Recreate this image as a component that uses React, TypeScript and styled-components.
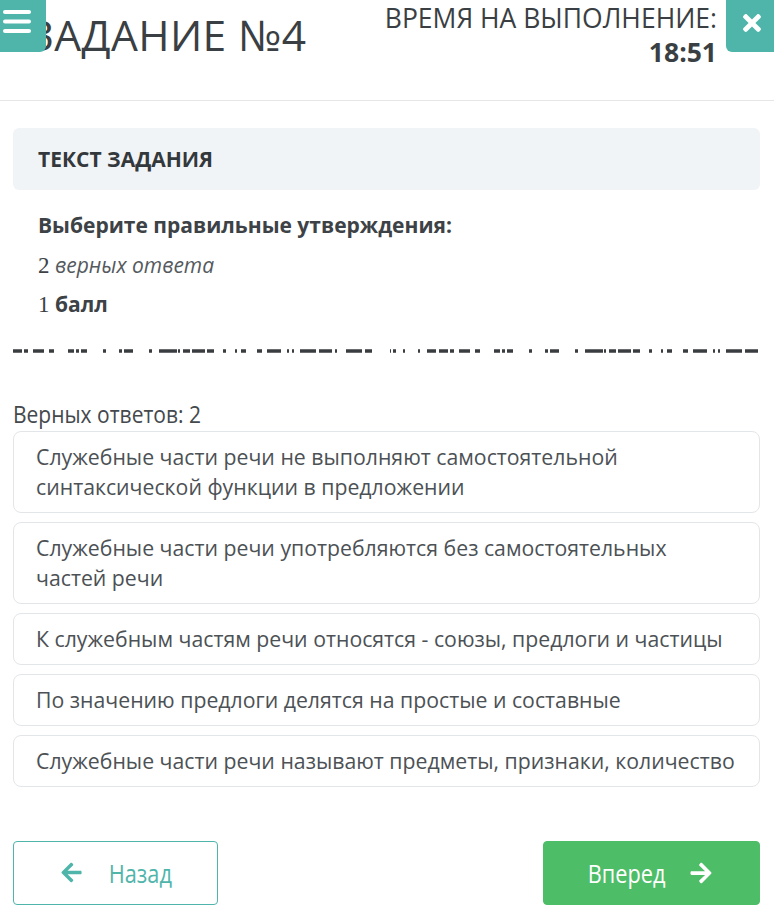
import React from "react";
import styled, { createGlobalStyle } from "styled-components";
import { FaArrowLeft, FaArrowRight, FaTimes } from "react-icons/fa";

const Global = createGlobalStyle`
  html, body { margin: 0; padding: 0; background: #fff; }
  body { font-family: "Open Sans", "Noto Sans", sans-serif; color: #3d4246; }
  * { box-sizing: border-box; }
`;

const Page = styled.div`
  position: relative;
  width: 774px;
  height: 905px;
  overflow: hidden;
`;

const Header = styled.header`
  height: 101px;
  border-bottom: 1px solid #e4e6e8;
  display: flex;
  justify-content: space-between;
  align-items: flex-start;
  padding: 0 57px 0 29px;
`;

const Title = styled.h1`
  margin: 0;
  padding-top: 6px;
  font-size: 42.5px;
  font-weight: 400;
  line-height: 58px;
  color: #3a3f43;
  letter-spacing: 0.4px;
`;

const Timer = styled.div`
  text-align: right;
  font-size: 26.5px;
  line-height: 34px;
  padding-top: 1px;
  color: #3a3f43;
`;

const TimerValue = styled.div`
  font-weight: 700;
`;

const CornerButton = styled.div<{ $side: "left" | "right" }>`
  position: absolute;
  top: 0;
  ${(p) => (p.$side === "left" ? "left: 0;" : "right: 0;")}
  width: ${(p) => (p.$side === "left" ? "46px" : "48px")};
  height: 52px;
  background: #4fb5aa;
  border-radius: ${(p) => (p.$side === "left" ? "0 0 6px 0" : "0 0 0 6px")};
  display: flex;
  align-items: center;
  justify-content: center;
  color: #fff;
`;

const Main = styled.main`
  padding: 27px 14px 0 13px;
`;

const TaskHead = styled.div`
  height: 62px;
  background: #f1f4f6;
  border-radius: 6px;
  display: flex;
  align-items: center;
  padding-left: 25px;
  font-size: 21px;
  font-weight: 700;
  color: #33383c;
`;

const TaskBody = styled.div`
  padding: 16px 25px 0;
  font-size: 21px;
  line-height: 39.5px;
  color: #3d4246;
`;

const Question = styled.div`
  font-weight: 700;
`;

const Num = styled.span`
  font-family: "Liberation Serif", "DejaVu Serif", serif;
  font-size: 23px;
`;

const Italic = styled.span`
  font-style: italic;
  color: #555a5e;
`;

const Bold = styled.span`
  font-weight: 700;
`;

const Dashes = styled.svg`
  display: block;
  margin-top: 24px;
  width: 747px;
  height: 4px;
`;

const Condensed = styled.span`
  display: inline-block;
  transform: scaleX(0.875);
  transform-origin: left center;
  white-space: nowrap;
`;

const CountLabel = styled.div`
  margin-top: 46px;
  font-size: 24px;
  line-height: 30px;
  color: #44494d;
`;

const Options = styled.div`
  display: flex;
  flex-direction: column;
  gap: 9px;
  margin-top: 2px;
`;

const Option = styled.div`
  border: 1px solid #e3e6e8;
  border-radius: 8px;
  background: #fff;
  padding: 10px 22px;
  font-size: 21.25px;
  line-height: 30px;
  color: #4c5155;
`;

const Footer = styled.div`
  display: flex;
  justify-content: space-between;
  margin-top: 54px;
`;

const NavButton = styled.div<{ $primary?: boolean }>`
  height: 64px;
  width: ${(p) => (p.$primary ? "217px" : "205px")};
  border-radius: 4px;
  display: flex;
  align-items: center;
  justify-content: center;
  font-size: 25px;
  ${(p) =>
    p.$primary
      ? "background: #4dbd67; color: #fff; border: 1px solid #4dbd67; padding-right: 8px; gap: 17px;"
      : "background: #fff; color: #4fb5aa; border: 1px solid #4fb5aa; padding-left: 6px; gap: 21px;"}
`;

const BtnText = styled.span`
  display: inline-block;
  transform: scaleX(0.87);
`;

const dashPattern = "9 2 4 5 11 5 5 14 6 2 3 2 6 16 3 13 3 2 9 16 3 7 18 1 2 3 7 2 13 2 7 9 3";

export default function App() {
  const options = [
    "Служебные части речи не выполняют самостоятельной синтаксической функции в предложении",
    "Служебные части речи употребляются без самостоятельных частей речи",
    "К служебным частям речи относятся - союзы, предлоги и частицы",
    "По значению предлоги делятся на простые и составные",
    "Служебные части речи называют предметы, признаки, количество",
  ];
  return (
    <Page>
      <Global />
      <Header>
        <Title>ЗАДАНИЕ №4</Title>
        <Timer>
          <div>ВРЕМЯ НА ВЫПОЛНЕНИЕ:</div>
          <TimerValue>18:51</TimerValue>
        </Timer>
      </Header>
      <CornerButton $side="left">
        <svg width="46" height="52" viewBox="0 0 46 52">
          <g stroke="#fff" strokeWidth="4" strokeLinecap="round">
            <line x1="5" y1="12" x2="29" y2="12" />
            <line x1="5" y1="21.5" x2="29" y2="21.5" />
            <line x1="5" y1="31" x2="29" y2="31" />
          </g>
        </svg>
      </CornerButton>
      <CornerButton $side="right">
        <FaTimes size={26} style={{ marginTop: -6, marginLeft: 4 }} />
      </CornerButton>
      <Main>
        <TaskHead>ТЕКСТ ЗАДАНИЯ</TaskHead>
        <TaskBody>
          <Question>Выберите правильные утверждения:</Question>
          <div>
            <Num>2</Num> <Italic>верных ответа</Italic>
          </div>
          <div>
            <Num>1</Num> <Bold>балл</Bold>
          </div>
        </TaskBody>
        <Dashes viewBox="0 0 747 4" preserveAspectRatio="none">
          <line x1="0" y1="2" x2="747" y2="2" stroke="#3a3d40" strokeWidth="3.5" strokeDasharray={dashPattern} />
        </Dashes>
        <CountLabel>
          <Condensed>Верных ответов: 2</Condensed>
        </CountLabel>
        <Options>
          {options.map((o) => (
            <Option key={o}>{o}</Option>
          ))}
        </Options>
        <Footer>
          <NavButton>
            <FaArrowLeft size={23} />
            <BtnText>Назад</BtnText>
          </NavButton>
          <NavButton $primary>
            <BtnText>Вперед</BtnText>
            <FaArrowRight size={24} />
          </NavButton>
        </Footer>
      </Main>
    </Page>
  );
}
